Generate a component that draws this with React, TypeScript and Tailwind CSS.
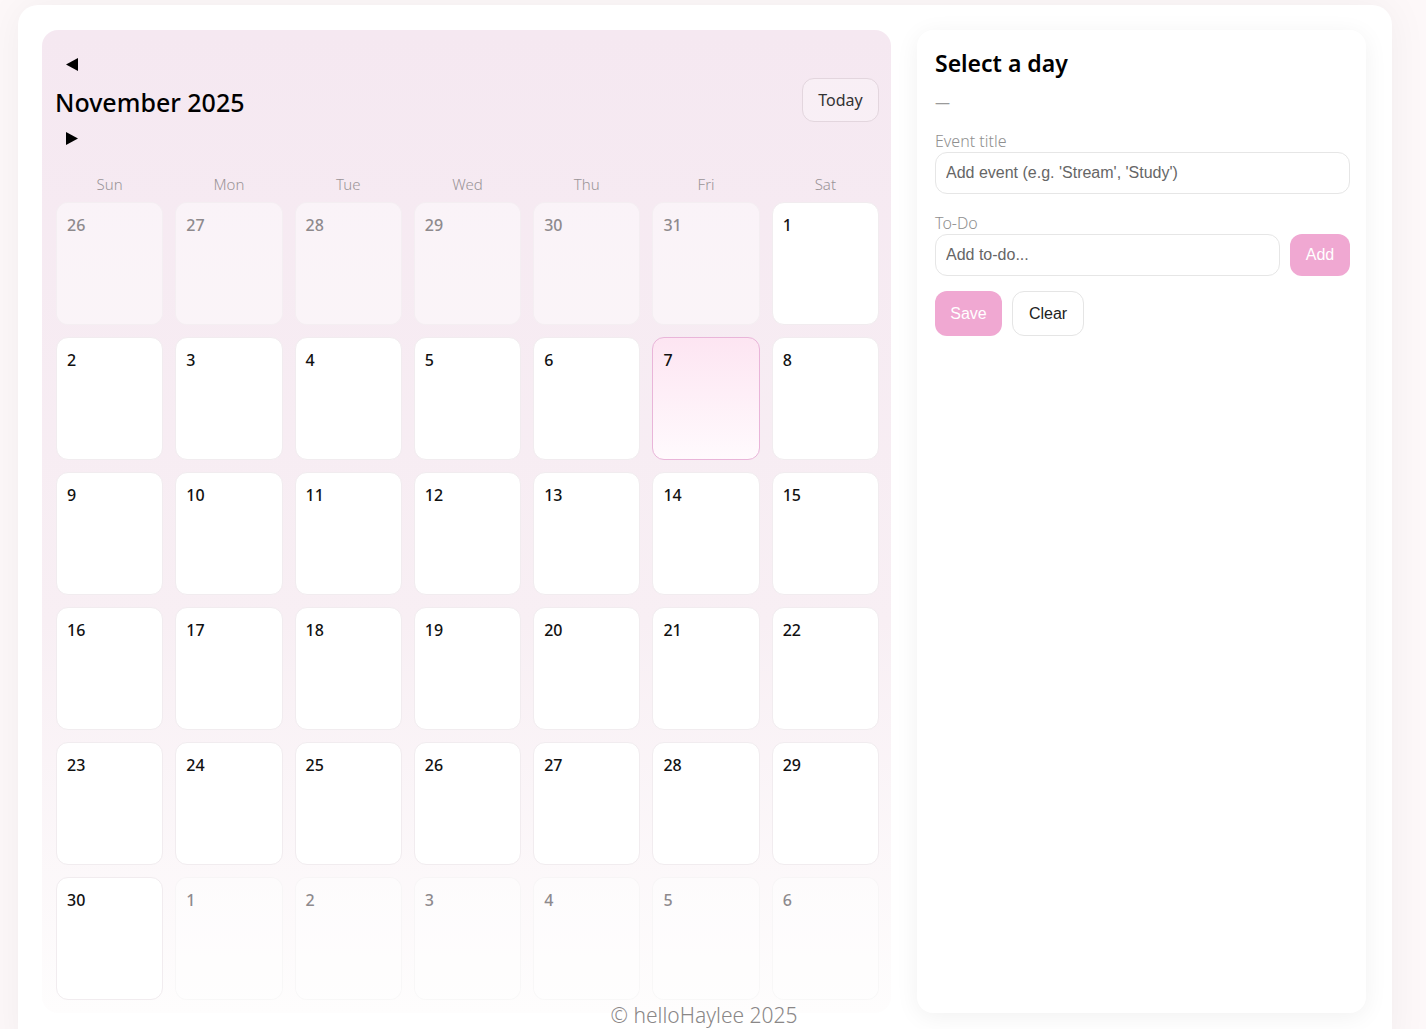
import React from 'react'

const dayNames = ['Sun', 'Mon', 'Tue', 'Wed', 'Thu', 'Fri', 'Sat']

type Cell = { day: number; inMonth: boolean; selected?: boolean }

function buildCells(): Cell[] {
    const cells: Cell[] = []
    // October tail
    for (let d = 26; d <= 31; d++) cells.push({ day: d, inMonth: false })
    for (let d = 1; d <= 30; d++) cells.push({ day: d, inMonth: true, selected: d === 7 })
    // December head
    for (let d = 1; d <= 6; d++) cells.push({ day: d, inMonth: false })
    return cells
}

function DayCell({ cell }: { cell: Cell }) {
    if (cell.selected) {
        return (
            <div className="h-[123px] rounded-[12px] border border-[#e9b5d9] bg-linear-to-b from-[#fde5f2] to-[#fffafd] px-[10px] pt-[10px]">
                <span className="text-[16px] font-medium text-[#111]">{cell.day}</span>
            </div>
        )
    }
    if (!cell.inMonth) {
        return (
            <div className="h-[123px] rounded-[12px] border border-black/[0.025] bg-white/45 px-[10px] pt-[10px]">
                <span className="text-[16px] font-medium text-[#8e8a8d]">{cell.day}</span>
            </div>
        )
    }
    return (
        <div className="h-[123px] rounded-[12px] border border-[#f1ecef] bg-white px-[10px] pt-[10px]">
            <span className="text-[16px] font-medium text-[#111]">{cell.day}</span>
        </div>
    )
}

export default function App() {
    const cells = buildCells()

    return (
        <div className="min-h-screen bg-[#fdf8f9] pt-[5px] font-['Noto_Sans',sans-serif]">
            <div className="ml-[18px] w-[1374px] rounded-[20px] bg-white pt-[25px] pl-[24px] pr-[26px] pb-[30px] shadow-[0_0_40px_rgba(0,0,0,0.05)]">
                <div className="grid grid-cols-[849px_449px] gap-[26px]">
                    {/* Calendar */}
                    <section className="rounded-[16px] bg-linear-to-b from-[#f5e8f1] via-[#f8eff4] via-60% to-[#fefdfd] pt-[14px] pl-[14px] pr-[12px] pb-[13px]">
                        <div className="flex items-center justify-between">
                            <div className="flex flex-col items-start">
                                <button className="flex h-[40px] items-center pl-[10px] pr-2">
                                    <svg width="12" height="13" viewBox="0 0 12 13">
                                        <path d="M12 0 L0 6.5 L12 13 Z" fill="#000" />
                                    </svg>
                                </button>
                                <h2 className="-ml-px text-[25px] leading-[36px] font-medium text-black">November 2025</h2>
                                <button className="flex h-[36px] items-center pl-[10px] pr-2">
                                    <svg width="12" height="13" viewBox="0 0 12 13">
                                        <path d="M0 0 L12 6.5 L0 13 Z" fill="#000" />
                                    </svg>
                                </button>
                            </div>
                            <button className="h-[44px] w-[77px] rounded-[12px] border border-[#e3d6de] bg-white/30 text-[16px] text-[#333]">
                                Today
                            </button>
                        </div>

                        <div className="mt-[18px] grid grid-cols-7 gap-x-[12px]">
                            {dayNames.map((d) => (
                                <div key={d} className="text-center text-[15px] leading-[20px] font-light text-[#9a9497]">
                                    {d}
                                </div>
                            ))}
                        </div>

                        <div className="mt-[8px] grid grid-cols-7 gap-[12px]">
                            {cells.map((c, i) => (
                                <DayCell key={i} cell={c} />
                            ))}
                        </div>
                    </section>

                    {/* Day editor */}
                    <aside className="rounded-[16px] bg-white pl-[18px] pr-[16px] pt-[18px] shadow-[0_4px_24px_rgba(0,0,0,0.06)]">
                        <h3 className="text-[23px] leading-[30px] font-semibold text-black">Select a day</h3>
                        <div className="mt-[14px] text-[15px] leading-[20px] text-[#9a9a9a]">—</div>

                        <label className="mt-[19px] block text-[16px] leading-[20px] font-light text-[#8f8f8f]">Event title</label>
                        <input
                            className="mt-px h-[42px] w-full rounded-[12px] border border-[#e6e6e6] px-[10px] font-['Liberation_Sans',Arial,sans-serif] text-[16px] text-[#333] placeholder:text-[#666] outline-none"
                            placeholder="Add event (e.g. 'Stream', 'Study')"
                        />

                        <label className="mt-[19px] block text-[16px] leading-[20px] font-light text-[#8f8f8f]">To-Do</label>
                        <div className="mt-px flex gap-[10px]">
                            <input
                                className="h-[42px] flex-1 rounded-[12px] border border-[#e6e6e6] px-[10px] font-['Liberation_Sans',Arial,sans-serif] text-[16px] text-[#333] placeholder:text-[#666] outline-none"
                                placeholder="Add to-do..."
                            />
                            <button className="h-[42px] w-[60px] rounded-[12px] bg-[#f0a8d2] font-['Liberation_Sans',Arial,sans-serif] text-[16px] text-white">
                                Add
                            </button>
                        </div>

                        <div className="mt-[15px] flex gap-[10px]">
                            <button className="h-[45px] w-[67px] rounded-[12px] bg-[#f0a8d2] font-['Liberation_Sans',Arial,sans-serif] text-[16px] text-white">
                                Save
                            </button>
                            <button className="h-[45px] w-[72px] rounded-[12px] border border-[#e5e5e5] bg-white font-['Liberation_Sans',Arial,sans-serif] text-[16px] text-[#222]">
                                Clear
                            </button>
                        </div>
                    </aside>
                </div>

                <footer className="-mt-[10px] text-center text-[21px] leading-[24px] font-light text-[#8a8787]">
                    © helloHaylee 2025
                </footer>
            </div>
        </div>
    )
}
